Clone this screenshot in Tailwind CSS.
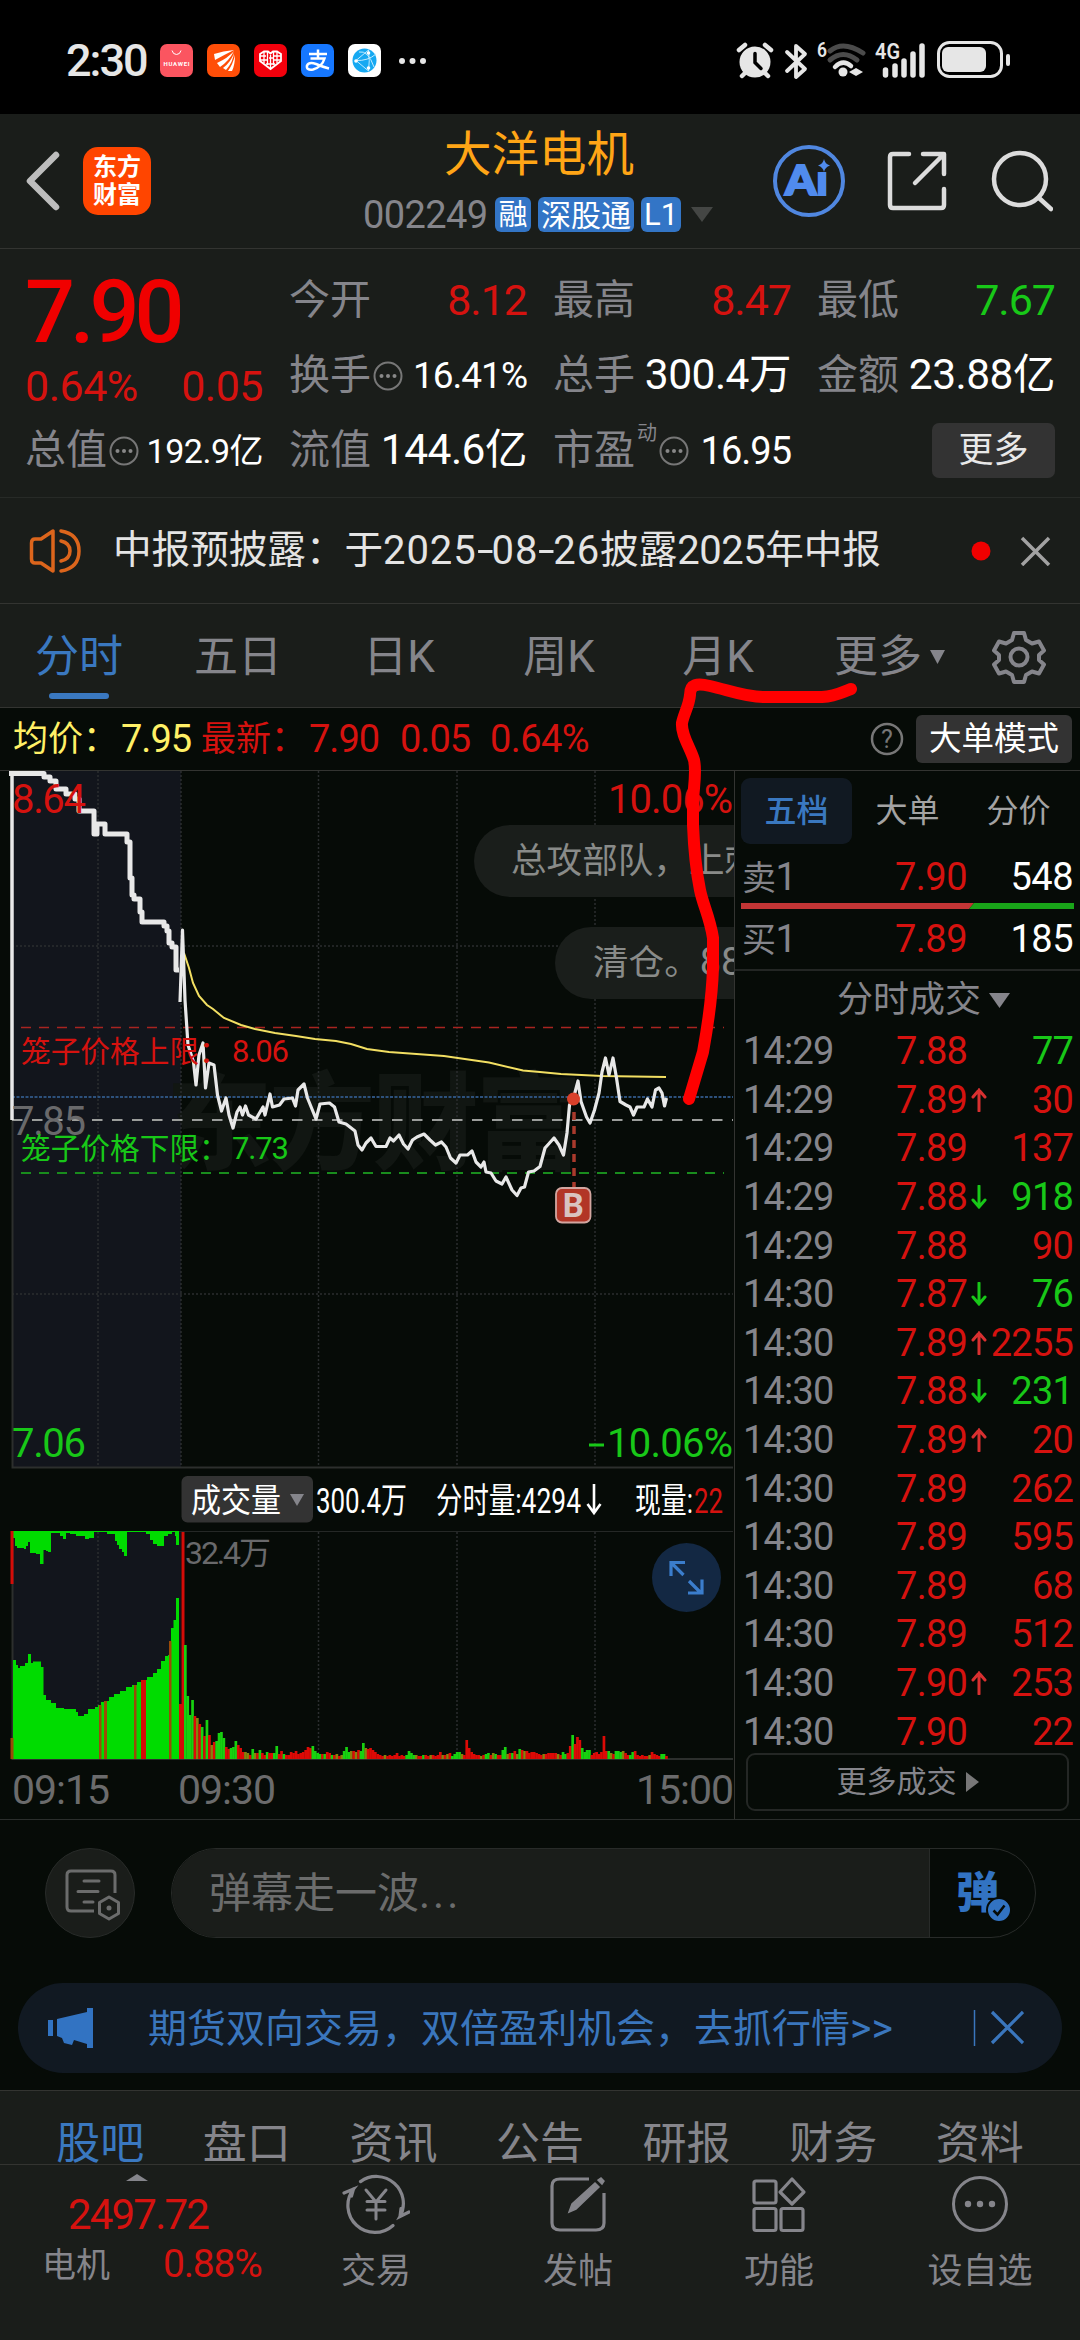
<!DOCTYPE html>
<html lang="zh-CN">
<head>
<meta charset="utf-8">
<title>大洋电机 002249</title>
<script src="https://cdn.jsdelivr.net/npm/@tailwindcss/browser@4"></script>
</head>
<body class="bg-black">
<div class="relative flex h-[2340px] w-[1080px] flex-col overflow-hidden bg-[#060b07] font-['Roboto','Noto_Sans_CJK_SC',sans-serif] leading-none whitespace-nowrap text-[#85858b]">

  <!-- status bar -->
  <div class="flex h-[114px] shrink-0 items-center bg-black pt-[7px] pl-[66px] text-[#e6e6e6]">
    <div class="w-[94px] text-[45px] font-medium tracking-[-2px]">2:30</div>
    <div class="flex gap-[14px]">
      <svg width="33" height="33" viewBox="0 0 33 33"><rect width="33" height="33" rx="7" fill="#fb5560"/><path d="M12 6.500q1 4 4.500 4t4.500-4" fill="none" stroke="#fff" stroke-width="1"/><text x="3.500" y="21.500" font-size="6" font-weight="700" fill="#fff" textLength="26">HUAWEI</text></svg>
      <svg width="33" height="33" viewBox="0 0 33 33"><rect width="33" height="33" rx="7" fill="#ff4e08"/><path d="M7 10Q16 7 27 6Q17 11 8 16ZM10 19Q21 14 27 7Q22 17 13 23ZM16 24Q24 18 27 9Q26 18 19 26ZM21 27Q26 20 28 11Q28 21 25 27Z" fill="#fff"/></svg>
      <svg width="33" height="33" viewBox="0 0 33 33"><rect width="33" height="33" rx="7" fill="#f3000c"/><path d="M16.500 25L6 17V10L10 7.500h4l2.500 2 2.500-2h4l4 2.500v7Z" fill="none" stroke="#fff" stroke-width="1.800"/><path d="M10 8v11M13.500 8v13M19.500 8v13M23 8v11M6 12h6M6 16h7M20 12h7M20 16h7M15 14h4M16.500 11v13M12 20h9" stroke="#fff" stroke-width="1.300"/></svg>
      <svg width="33" height="33" viewBox="0 0 33 33"><rect width="33" height="33" rx="7" fill="#1677ff"/><path d="M8 10h18M17 5.500v9M9.500 14.500h14Q21 23 12 25.500Q5 26.500 6 21.500Q8 17.500 15 20Q22 23 28 24.500" fill="none" stroke="#fff" stroke-width="2.500"/></svg>
      <svg width="33" height="33" viewBox="0 0 33 33"><rect width="33" height="33" rx="7" fill="#fff"/><circle cx="16.500" cy="16.500" r="12" fill="#16a9f2"/><path d="M20.500 6L8 16.500 20.500 27M8 16.500Q20 17 28 10M20.500 6Q22 17 20.500 27M11 8Q20 6 26 23" fill="none" stroke="#bfeaff" stroke-width="1"/><circle cx="20.500" cy="9" r="1.800" fill="#fff"/><circle cx="8" cy="17" r="1.800" fill="#fff"/><circle cx="20.500" cy="24" r="1.800" fill="#fff"/></svg>
    </div>
    <svg class="ml-[17px]" width="30" height="8" viewBox="0 0 30 8" fill="#e6e6e6"><circle cx="4" cy="4" r="3"/><circle cx="14.500" cy="4" r="3"/><circle cx="25" cy="4" r="3"/></svg>
    <svg class="ml-[308px]" width="276" height="42" viewBox="735 40 276 42">
      <g fill="none" stroke="#e6e6e6" stroke-linecap="round">
        <circle cx="754" cy="62" r="15.500" fill="#e6e6e6" stroke="none"/>
        <path d="M738 50l6-5M770 50l-6-5M744 73l-3 3M764 73l3 3" stroke-width="4.500"/>
        <path d="M754 53.500v9l6 6" stroke="#000" stroke-width="3.500"/>
        <path d="M786 52l18 17-9 8V46l9 8-18 17" stroke-width="3.800" stroke-linejoin="round"/>
        <path d="M829 51Q842 40 862 53" stroke="#4b4b4b" stroke-width="5"/>
        <path d="M829 60Q842 49 856 60" stroke="#4b4b4b" stroke-width="5"/>
        <path d="M834 67Q842 59 850 66" stroke-width="4.500"/>
        <path d="M884.500 70v5M894 66v9M903 61v14M912 54v21M921 46v29" stroke-width="5.500"/>
        <rect x="937.500" y="42.500" width="63" height="34" rx="11" stroke-width="3"/>
        <path d="M1007 56v8" stroke-width="4"/>
      </g>
      <g fill="#e6e6e6"><circle cx="842" cy="72" r="4.500"/><path d="M848 72l7-4v8ZM862 72l-7-4v8Z"/><rect x="941" y="47" width="44" height="25" rx="6"/>
      <text x="816" y="57" font-size="21" font-weight="600" textLength="10" lengthAdjust="spacingAndGlyphs">6</text>
      <text x="874" y="59" font-size="22" font-weight="600" textLength="25" lengthAdjust="spacingAndGlyphs">4G</text></g>
    </svg>
  </div>

  <!-- title bar -->
  <div class="flex h-[135px] shrink-0 items-center border-b border-[#333431] bg-[#1a1d1a]">
    <svg class="ml-[24px]" width="38" height="62" viewBox="0 0 38 62"><path d="M32 5L6 31l26 26" fill="none" stroke="#bdbdbd" stroke-width="6.500" stroke-linecap="round" stroke-linejoin="round"/></svg>
    <div class="ml-[21px] flex h-[68px] w-[68px] flex-col items-center justify-center gap-1 rounded-[15px] bg-[#ff4500] text-[24px] font-bold text-white"><span>东方</span><span>财富</span></div>
    <div class="ml-[212px] flex w-[352px] flex-col pt-[4px]">
      <div class="pl-[81px] text-[47.500px] text-[#ffa516]">大洋电机</div>
      <div class="mt-[16px] flex items-center gap-[7px] text-[31px] text-white">
        <span class="w-[125px] text-[38px] tracking-[-0.6px] text-[#85858b]">002249</span>
        <span class="flex h-[35px] w-[36px] items-center justify-center rounded-[6px] bg-[#3375c6] pt-[2px] text-[29px]">融</span>
        <span class="flex h-[35px] w-[96px] items-center justify-center rounded-[6px] bg-[#3375c6] pt-[2px] text-[30px]">深股通</span>
        <span class="flex h-[35px] w-[40px] items-center justify-center rounded-[6px] bg-[#3375c6] text-[31px]">L1</span>
        <svg class="ml-[3px]" width="22" height="15" viewBox="0 0 22 15"><path d="M0 0h22L11 15Z" fill="#444644"/></svg>
      </div>
    </div>
    <svg class="ml-[57px]" width="74" height="76" viewBox="0 0 74 76"><circle cx="37" cy="38" r="34" fill="none" stroke="#5087e0" stroke-width="4"/><text x="13" y="52" font-family="Lato" font-weight="900" font-size="41" fill="#508bee" stroke="#508bee" stroke-width="2" textLength="43" lengthAdjust="spacingAndGlyphs">Aı</text><path d="M52 16q1 5 6 6.500-5 1.500-6 6.500-1-5-6-6.500 5-1.500 6-6.500Z" fill="#508bee"/></svg>
    <svg class="ml-[41px]" width="60" height="60" viewBox="0 0 60 60" fill="none" stroke="#dcdcdc" stroke-width="4.500" stroke-linecap="round" stroke-linejoin="round"><path d="M22 3H6Q3 3 3 6v48q0 3 3 3h48q3 0 3-3V38M36 3h21v20M55 5L28 32"/></svg>
    <svg class="ml-[44px]" width="62" height="64" viewBox="0 0 62 64" fill="none" stroke="#dcdcdc" stroke-width="4.500" stroke-linecap="round"><circle cx="29" cy="30" r="26"/><path d="M48 49l12 11"/></svg>
  </div>

  <!-- quote -->
  <div class="grid h-[249px] shrink-0 grid-cols-[238px_238px_238px_238px] grid-rows-[75px_75px_75px] gap-x-[26px] border-b border-[#272a27] bg-[#1a1d1a] pt-[14px] pl-[25px] text-[41px]">
    <div class="row-span-2 flex flex-col text-[#d5120f]">
      <div class="flex h-[98px] items-center text-[88px] font-medium tracking-[-5px] text-[#f00000]">7.90</div>
      <div class="flex h-[53px] items-center justify-between text-[43px] tracking-[-0.5px]"><span>0.64%</span><span>0.05</span></div>
    </div>
    <div class="flex items-center justify-between"><span>今开</span><span class="text-[43px] tracking-[-1px] text-[#d5120f]">8.12</span></div>
    <div class="flex items-center justify-between"><span>最高</span><span class="text-[43px] tracking-[-1px] text-[#d5120f]">8.47</span></div>
    <div class="flex items-center justify-between"><span>最低</span><span class="text-[43px] tracking-[-1px] text-[#18c818]">7.67</span></div>
    <div class="flex items-center"><span>换手</span><svg class="ml-[2px]" width="30" height="30" viewBox="0 0 30 30"><circle cx="15" cy="15" r="13.500" fill="none" stroke="#777" stroke-width="2"/><g fill="#888"><circle cx="8.500" cy="15" r="2"/><circle cx="15" cy="15" r="2"/><circle cx="21.500" cy="15" r="2"/></g></svg><span class="ml-auto text-[37px] tracking-[-1px] text-white">16.41%</span></div>
    <div class="flex items-center justify-between"><span>总手</span><span class="text-[42.500px] tracking-[-0.5px] text-white">300.4万</span></div>
    <div class="flex items-center justify-between"><span>金额</span><span class="text-[42.500px] tracking-[-0.5px] text-white">23.88亿</span></div>
    <div class="flex items-center"><span>总值</span><svg class="ml-[2px]" width="30" height="30" viewBox="0 0 30 30"><circle cx="15" cy="15" r="13.500" fill="none" stroke="#777" stroke-width="2"/><g fill="#888"><circle cx="8.500" cy="15" r="2"/><circle cx="15" cy="15" r="2"/><circle cx="21.500" cy="15" r="2"/></g></svg><span class="ml-auto text-[34px] tracking-[-0.5px] text-white">192.9亿</span></div>
    <div class="flex items-center justify-between"><span>流值</span><span class="text-[42.500px] tracking-[-0.5px] text-white">144.6亿</span></div>
    <div class="flex items-center"><span>市盈</span><span class="ml-[2px] mb-9 text-[20px]">动</span><svg class="ml-[2px]" width="30" height="30" viewBox="0 0 30 30"><circle cx="15" cy="15" r="13.500" fill="none" stroke="#777" stroke-width="2"/><g fill="#888"><circle cx="8.500" cy="15" r="2"/><circle cx="15" cy="15" r="2"/><circle cx="21.500" cy="15" r="2"/></g></svg><span class="ml-auto text-[38px] tracking-[-1px] text-white">16.95</span></div>
    <div class="flex items-center justify-end"><span class="flex h-[55px] w-[123px] items-center justify-center rounded-[7px] bg-[#333] text-[35px] text-[#e8e8e8]">更多</span></div>
  </div>

  <!-- notice -->
  <div class="flex h-[106px] shrink-0 items-center border-b border-[#333431] bg-[#1a1d1a] text-[38.600px] text-[#e4e4e4]">
    <svg class="ml-[29px]" width="54" height="46" viewBox="0 0 54 46" fill="none" stroke="#dc651c" stroke-width="3.500" stroke-linecap="round" stroke-linejoin="round"><path d="M24 3v40L12 35H6Q2.500 35 2.500 31V15Q2.500 11 6 11h6ZM32 3Q50 6 50 23T32 43M32 13Q41 15 41 23T32 33"/></svg>
    <div class="ml-[30px] flex items-center"><span>中报预披露：于</span><span class="text-[40px] tracking-[0.900px]">2025<span class="inline-block w-[15px] origin-left scale-x-150">-</span>08<span class="inline-block w-[15px] origin-left scale-x-150">-</span>26</span><span>披露</span><span class="text-[40px] tracking-[-0.5px]">2025</span><span>年中报</span></div>
    <svg class="absolute left-[970px]" width="82" height="30" viewBox="0 0 82 30"><circle cx="11" cy="15" r="9.500" fill="#f00000"/><path d="M52 2l27 27M79 2L52 29" stroke="#a2a2a2" stroke-width="3.500"/></svg>
  </div>

  <!-- period tabs -->
  <div class="flex h-[104px] shrink-0 items-center border-b border-[#333431] bg-[#1a1d1a] pt-[2px] text-[44px]">
    <div class="relative flex h-full w-[158px] items-center justify-center text-[#3a78c0]">分时<span class="absolute bottom-[8px] h-[6px] w-[60px] rounded-full bg-[#3a78c0]"></span></div>
    <div class="w-[160px] text-center">五日</div>
    <div class="w-[162px] text-center">日K</div>
    <div class="w-[158px] text-center">周K</div>
    <div class="w-[160px] text-center">月K</div>
    <div class="ml-[36px] flex w-[150px] items-center gap-[8px]">更多<svg width="15" height="14" viewBox="0 0 15 14"><path d="M0 0h15L7.500 14Z" fill="#85858b"/></svg></div>
    <svg class="ml-[7px]" width="56" height="56" viewBox="0 0 56 56" fill="none" stroke="#85858b" stroke-width="4"><path stroke-linejoin="round" d="M23 4h10l2 7 6 3.500 7-2 5 9-5 4.500v5l5 4.500-5 9-7-2-6 3.500-2 7H23l-2-7-6-3.500-7 2-5-9L8 31v-5l-5-4.500 5-9 7 2L21 11Z"/><circle cx="28" cy="28" r="8.500"/></svg>
  </div>

  <!-- price summary -->
  <div class="flex h-[63px] shrink-0 items-center border-b border-[#333431] pl-[13px] text-[35px] text-[#d5120f]">
    <span class="w-[108px] text-[#fff066]">均价：</span><span class="w-[80px] text-[38px] tracking-[-1px] text-[#fff066]">7.95</span>
    <span class="w-[108px]">最新：</span><span class="w-[91px] text-[38px] tracking-[-1px]">7.90</span><span class="w-[90px] text-[38px] tracking-[-1px]">0.05</span><span class="w-[120px] text-[38px] tracking-[-0.6px]">0.64%</span>
    <svg class="ml-[260px]" width="34" height="34" viewBox="0 0 34 34"><circle cx="17" cy="17" r="15" fill="none" stroke="#777" stroke-width="2.500"/><text x="17" y="26" font-size="25" text-anchor="middle" fill="#777">?</text></svg>
    <span class="ml-[12px] flex h-[48px] w-[156px] items-center justify-center rounded-[6px] bg-[#333] text-[32.500px] text-white">大单模式</span>
  </div>

  <!-- charts and order panel -->
  <div class="flex h-[1049px] shrink-0 border-b border-[#2b2e2c]">
    <svg class="shrink-0" width="734" height="1048" viewBox="0 771 734 1048">
      <rect x="12" y="771" width="169" height="697" fill="#12151c"/>
      <rect x="12" y="1531" width="169" height="228" fill="#12151c"/>
      <text x="166" y="1161" font-size="106" font-weight="900" fill="#111612" textLength="416">东方财富</text>
      <g stroke="#2b2e2f" stroke-width="1.500" stroke-dasharray="2 2"><path d="M98 771V1467M181 771V1467M318.500 771V1467M457 771V1467M595 771V1467M12 946H733M12 1294H733M98 1532V1759M318.500 1532V1759M457 1532V1759M595 1532V1759"/></g>
      <path d="M12.500 1120V1467.500H733M12.500 1531V1759H733" fill="none" stroke="#2c2f2d" stroke-width="2"/><path d="M12 1531.500H733" stroke="#252826"/>
      <g fill="#1a1e1b"><rect x="474" y="825" width="320" height="72" rx="36"/><rect x="555" y="927" width="300" height="72" rx="36"/></g>
      <g font-size="35.600" fill="#898b89"><text x="511" y="873">总攻部队，上刺</text><text x="593" y="975">清仓。<tspan font-size="38">88</tspan></text></g>
      <path d="M21 1027.500H724" stroke="#a82420" stroke-width="1.500" stroke-dasharray="10 8"/>
      <path d="M21 1173H724" stroke="#198c1d" stroke-width="1.800" stroke-dasharray="10 8"/>
      <path d="M12 1097H733" stroke="#2d517c" stroke-width="2" stroke-dasharray="3 1.500"/>
      <path d="M12 1120H733" stroke="#9b9d9b" stroke-width="2" stroke-dasharray="10.500 9.500"/>
      <path d="M184 953L189 968 193 983 199 996 207 1005 213 1009 224 1018 241 1025 255 1029 275 1033 296 1036 315 1039 336 1041 351 1044 367 1049 389 1052 444 1056 489 1062.500 523 1070.500 540 1072 561 1074 602 1076 666 1077" fill="none" stroke="#f2df62" stroke-width="2"/>
      <path d="M12 1120V773" stroke="#e8e8e8" stroke-width="3.500"/>
      <path d="M9 773.500H44V777H50V781H56V789H66V794H75V799H79V811H94V834H97V824H105V834H127V842H130V878H132V895H134V899H140V912H142V922H164V926H167V931H169V943H172V947H176V970H179" fill="none" stroke="#e8e8e8" stroke-width="5" stroke-linejoin="round"/>
      <path d="M180 1002L182.500 930 185 1000 188 1045 193.500 1062 196 1085 199 1055 203 1043 205.500 1088 209 1063 214 1065 217.500 1095 221.500 1111 226 1098 229 1115 233 1128 237 1112 240 1107 242.500 1115 245.500 1106 248.500 1115 256 1119 263 1107 265 1115 270 1094 272.500 1107 279.500 1105 284 1099 292.500 1098 295.500 1106 298 1090 304 1084 307.500 1098 316 1119 320 1104 329.500 1103 334.500 1107 339 1122 346 1124 355 1131 358 1145 362 1150 366 1143 371 1138 376 1146.500H386L390 1138 393.500 1141 399 1135 403.500 1144 408 1149 412.500 1140 417 1137 424 1134 430 1140 435.500 1145 441.500 1142 446 1147 450.500 1158 456 1163 460 1155H467.500L472 1151 476 1162 481 1167 484 1162 486 1172 491 1173 496 1181 502 1184 506 1177 512 1190 517 1195.500 521 1188 524.500 1187 528.500 1172 534 1171 540 1166.500 545 1148 554 1138 559 1145 563.500 1155 567 1133 569.500 1105 573.500 1098 578 1081 581 1101.500 586.500 1117 590 1123 594.500 1110 599 1093 602 1072 605.500 1058 609 1075 613 1058 616.500 1078 620 1101.500 626 1105 630 1107 633.500 1115 637 1107H644L647.500 1099 652 1107 655.500 1090 659 1088 662 1093 664.500 1106 666.500 1098" fill="none" stroke="#e8e8e8" stroke-width="3.200" stroke-linejoin="round"/>
      <circle cx="573.500" cy="1099" r="6.500" fill="#d9402a"/><path d="M574 1112V1187" stroke="#a93a2c" stroke-width="3.500" stroke-dasharray="8 6"/>
      <rect x="556" y="1188" width="34.500" height="34.500" rx="6" fill="#b23526" stroke="#d2a6a0" stroke-width="1.800"/><text x="573.300" y="1217" font-size="33" font-weight="700" fill="#d9c2c0" text-anchor="middle">B</text>
      <g font-size="40">
        <g fill="#d5120f"><text x="12" y="813" textLength="74">8.64</text><text x="608" y="813" textLength="125">10.06%</text><text x="21" y="1061.500" font-size="29.700">笼子价格上限：</text><text x="232" y="1061.500" font-size="31" textLength="57">8.06</text></g>
        <text x="12" y="1135" textLength="74" fill="#69696b">7.85</text>
        <g fill="#18c818"><text x="21" y="1159" font-size="29.700">笼子价格下限：</text><text x="232" y="1159" font-size="31" textLength="57">7.73</text><text x="12" y="1456.500" textLength="74">7.06</text><text x="607" y="1456.500" textLength="126">10.06%</text><rect x="589" y="1443.500" width="15" height="3"/></g>
      </g>
      <!-- volume caption -->
      <rect x="181.500" y="1476" width="131.500" height="46.500" rx="6" fill="#333"/>
      <path d="M290 1494h14l-7 12Z" fill="#85858b"/>
      <g font-size="35" fill="#fff"><text x="191" y="1511.500" font-size="33" textLength="90" lengthAdjust="spacingAndGlyphs">成交量</text><text x="316" y="1512.500" textLength="91" lengthAdjust="spacingAndGlyphs">300.4万</text><text x="436" y="1512.500" textLength="145" lengthAdjust="spacingAndGlyphs">分时量:4294</text><path d="M594 1484v29M587.500 1504l6.500 9 6.500-9" fill="none" stroke="#fff" stroke-width="2.600"/><text x="635" y="1512.500" textLength="58" lengthAdjust="spacingAndGlyphs">现量:</text><text x="694" y="1512.500" textLength="29" lengthAdjust="spacingAndGlyphs" fill="#d5120f">22</text></g>
      <!-- auction volume -->
      <path fill="#00dc00" d="M13 1759V1660H16V1665H18V1668H20V1666H25V1663H28V1654H31V1663H33V1661.500H41V1667H43.500V1695H46V1700H51V1703H56V1708H64V1709H76V1712H78V1716H84V1714H88V1709H95V1707H98V1705H101V1702H104V1701H109V1697H114V1694H120V1691H126V1687H132V1685H137V1682H143V1680H147V1677H153V1673H157V1669H161V1661H165V1656H168V1655H171V1628H173.500V1620H176V1598H179V1759Z"/>
      <path fill="#00dc00" d="M13 1531V1538H15V1546H17V1548H24V1549H26V1546H28V1542H30V1553H36V1554H40V1564H43.500V1550H46V1551H48V1552H51V1533H60V1536H63V1539H66V1533H70V1534H76V1536H85V1539H89V1538H94V1532H107V1534H115V1541H117V1545H119V1549H122V1552H124V1556H127V1532H146V1534H150V1540H153V1544H157V1546H164V1536H168V1534H172V1532H175V1536H176V1545H179V1531Z"/>
      <g fill="#9a4a08"><rect x="10.500" y="1738" width="3" height="21"/><rect x="99" y="1705" width="2.500" height="54"/><rect x="104" y="1701" width="3" height="58"/><rect x="134" y="1685" width="2.500" height="74"/><rect x="169" y="1641" width="2.500" height="118"/></g>
      <g fill="#d40c08"><rect x="10.500" y="1531" width="3" height="53"/><rect x="141" y="1680" width="5" height="79"/><rect x="179" y="1704" width="3" height="55"/><rect x="181.500" y="1532" width="3" height="227"/></g>
      <g id="bars"></g>
      <text x="185" y="1564" font-size="32" fill="#69696b" textLength="86">32.4万</text>
      <circle cx="686.500" cy="1577.500" r="34.500" fill="#132843"/>
      <path d="M671 1576v-13.500h14M671.500 1563l12 12M689 1581l12 12M702 1579.500v13.500h-14" fill="none" stroke="#3b7dcc" stroke-width="3.200"/>
      <g font-size="41" fill="#6b6b6c"><text x="12" y="1804" textLength="98">09:15</text><text x="178" y="1804" textLength="98">09:30</text><text x="636" y="1804" textLength="98">15:00</text></g>
    </svg>

    <div class="flex w-[346px] flex-col border-l border-[#333431]">
      <div class="flex h-[79px] items-center pl-[6px] text-[32px] text-[#a3a3a3]">
        <span class="flex h-[66px] w-[111px] items-center justify-center rounded-[9px] bg-[#111922] font-medium text-[#3a78c0]">五档</span>
        <span class="w-[111px] text-center">大单</span><span class="w-[111px] text-center">分价</span>
      </div>
      <div class="flex h-[53px] items-center pr-[7px] pl-[7px] text-[38px] tracking-[-0.5px]"><span class="w-[120px]"><span class="text-[34px]">卖</span>1</span><span class="w-[105px] text-right text-[#d5120f]">7.90</span><span class="ml-auto text-white">548</span></div>
      <svg class="ml-[6px] shrink-0" width="333" height="6" viewBox="0 0 333 6"><path d="M0 0h233l-5 6H0Z" fill="#c23535"/><path d="M233 0h100v6H228Z" fill="#19a519"/></svg>
      <div class="flex h-[60px] items-center pr-[7px] pl-[7px] text-[38px] tracking-[-0.5px]"><span class="w-[120px]"><span class="text-[34px]">买</span>1</span><span class="w-[105px] text-right text-[#d5120f]">7.89</span><span class="ml-auto text-white">185</span></div>
      <div class="flex h-[58px] items-center border-t-2 border-[#232624] pt-[2px] pl-[102px] text-[36px]">分时成交<svg class="ml-[8px]" width="21" height="15" viewBox="0 0 21 15"><path d="M0 0h21L10.500 15Z" fill="#85858b"/></svg></div>
      <div id="ticks" class="flex flex-col text-[38px] tracking-[-0.8px]"></div>
      <div class="mt-[-3px] ml-[11px] flex h-[58px] w-[323px] shrink-0 items-center justify-center gap-[9px] rounded-[9px] border-2 border-[#242725] text-[30px]">更多成交<svg width="13" height="20" viewBox="0 0 13 20"><path d="M0 0l13 10L0 20Z" fill="#777"/></svg></div>
    </div>
  </div>

  <!-- comment input -->
  <div class="flex h-[90px] shrink-0 mt-[28px] pl-[45px]">
    <div class="flex h-[90px] w-[90px] items-center justify-center rounded-full border border-[#282b29] bg-[#1a1d1a]">
      <svg class="mt-1 ml-[3px]" width="58" height="54" viewBox="0 0 58 54" fill="none" stroke="#6b6c6c" stroke-width="3" stroke-linejoin="round"><path d="M31 43H8Q4 43 4 39V7Q4 3 8 3H48Q52 3 52 7V25"/><path d="M21 13h15M15 23.500h20M21 34h9" stroke-linecap="round"/><path d="M46 29l9.500 5.500v11L46 51l-9.500-5.500v-11Z"/><circle cx="46" cy="40" r="2.500" fill="#6b6c6c" stroke="none"/></svg>
    </div>
    <div class="ml-[36px] flex w-[865px] items-stretch overflow-hidden rounded-full border border-[#282b29]">
      <div class="flex w-[758px] items-center border-r border-[#282b29] bg-[#1a1d1a] pt-[2px] pl-[37px] text-[42px] text-[#6b6c6c]">弹幕走一波<span class="tracking-[3px]">...</span></div>
      <div class="relative flex flex-1 items-center pl-[26px] text-[43px] font-black text-[#3273c2]">弹<svg class="absolute top-[48px] left-[56px]" width="26" height="26" viewBox="0 0 26 26"><circle cx="13" cy="13" r="12" fill="#3273c2" stroke="#060b07" stroke-width="2"/><path d="M7.500 13.500l4 4 7-9" fill="none" stroke="#060b07" stroke-width="2.500"/></svg></div>
    </div>
  </div>

  <!-- promotion -->
  <div class="mt-[45px] ml-[18px] flex h-[90px] w-[1044px] shrink-0 items-center rounded-full bg-[#111922] text-[39px] text-[#3a76bd]">
    <svg class="ml-[30px]" width="46" height="40" viewBox="0 0 46 40" fill="#3273c2"><path d="M0 12h5v16H0ZM9 11L39 4V0h6v40h-6v-4l-13-4-2 5-8-2-2-5-5-2Z"/></svg>
    <span class="ml-[54px]">期货双向交易，双倍盈利机会，去抓行情<span class="text-[41px]">&gt;&gt;</span></span>
    <svg class="absolute left-[972px]" width="52" height="38" viewBox="0 0 52 38" stroke="#3a76bd"><path d="M2.500 1v36" stroke-width="1.500"/><path d="M20 3l31 31M51 3L20 34" stroke-width="3.200"/></svg>
  </div>

  <!-- content tabs -->
  <div class="mt-[17px] flex h-[75px] shrink-0 items-center overflow-hidden border-y border-[#333431] bg-[#1a1d1a] px-[27px] pt-[33px] text-[44px]">
    <span class="flex-1 text-center text-[#3a78c0]">股吧</span><span class="flex-1 text-center">盘口</span><span class="flex-1 text-center">资讯</span><span class="flex-1 text-center">公告</span><span class="flex-1 text-center">研报</span><span class="flex-1 text-center">财务</span><span class="flex-1 text-center">资料</span>
  </div>

  <!-- bottom bar -->
  <div class="flex h-[175px] shrink-0 bg-[#1a1d1a] text-[35px]">
    <div class="flex w-[274px] flex-col items-center pt-[9px]">
      <svg width="22" height="7" viewBox="0 0 22 7"><path d="M0 7L11 0l11 7Z" fill="#85858b"/></svg>
      <div class="mt-[13px] pl-[2px] text-[42px] tracking-[-1.8px] text-[#d5120f]">2497.72</div>
      <div class="mt-[9px] flex w-full items-center pl-[42px]"><span class="w-[121px] text-[34px]">电机</span><span class="text-[39px] tracking-[-1.2px] text-[#d5120f]">0.88%</span></div>
    </div>
    <div class="flex w-[204px] flex-col items-center pt-[8px]">
      <svg width="68" height="62" viewBox="0 0 68 62" fill="none" stroke="#85858b" stroke-width="3.200" stroke-linecap="round"><path d="M18.500 8.600A27 27 0 0 1 58 43.500l9-4.500M58 43.500l1-8"/><path d="M51 52.500A27 27 0 0 1 11.500 16L2 20M11.500 16l-2 7"/><path d="M24 17l10 12 10-12M34 29v17M25 28.500h18M25 37h18" stroke-width="3"/></svg>
      <span class="mt-[19px]">交易</span>
    </div>
    <div class="flex w-[200px] flex-col items-center pt-[8px]">
      <svg width="60" height="62" viewBox="0 0 60 62" fill="none" stroke="#85858b" stroke-width="3.200"><path d="M41 6H12Q4 6 4 13V50Q4 57 12 57H48Q56 57 56 50V20"/><path d="M21 39l3-8L47 10l4 4L28 36ZM50 7l3-2 3 3-2 3Z" fill="#85858b" stroke-width="1.500"/></svg>
      <span class="mt-[19px]">发帖</span>
    </div>
    <div class="flex w-[202px] flex-col items-center pt-[8px]">
      <svg width="60" height="62" viewBox="0 0 60 62" fill="none" stroke="#85858b" stroke-width="3.200" stroke-linejoin="round"><rect x="5" y="8" width="22" height="22" rx="2"/><rect x="5" y="35.500" width="22" height="22" rx="2"/><rect x="32" y="35.500" width="22" height="22" rx="2"/><path d="M43 6l12 13-12 12-12-12Z"/></svg>
      <span class="mt-[19px]">功能</span>
    </div>
    <div class="flex w-[200px] flex-col items-center pt-[8px]">
      <svg width="60" height="62" viewBox="0 0 60 62"><circle cx="30" cy="31" r="26.500" fill="none" stroke="#85858b" stroke-width="3"/><g fill="#85858b"><circle cx="18" cy="31" r="3.200"/><circle cx="30" cy="31" r="3.200"/><circle cx="42" cy="31" r="3.200"/></g></svg>
      <span class="mt-[19px]">设自选</span>
    </div>
  </div>

  <!-- freehand marker stroke -->
  <svg class="absolute top-[670px] left-[660px]" width="210" height="450" viewBox="660 670 210 450" fill="none" stroke="#ff0000" stroke-width="12" stroke-linecap="round" stroke-linejoin="round"><path d="M851 689C840 693 836 696 822 697H763C745 697 728 690 710 686C697 683 690 684 690 695C689 706 684 713 682 723C681 735 690 747 694 760C697 773 693 790 693 803V825C694 850 696 870 700 890C703 905 710 918 713 938V968C712 1000 707 1030 703 1052Q700 1062 689 1099"/></svg>
</div>

<script>
  // trade ticks: time, price, direction, volume, side
  var ticks = [
    ['14:29','7.88','','77','g'],['14:29','7.89','u','30','r'],['14:29','7.89','','137','r'],['14:29','7.88','d','918','g'],
    ['14:29','7.88','','90','r'],['14:30','7.87','d','76','g'],['14:30','7.89','u','2255','r'],['14:30','7.88','d','231','g'],
    ['14:30','7.89','u','20','r'],['14:30','7.89','','262','r'],['14:30','7.89','','595','r'],['14:30','7.89','','68','r'],
    ['14:30','7.89','','512','r'],['14:30','7.90','u','253','r'],['14:30','7.90','','22','r']
  ];
  var up = '<svg width="16" height="24" viewBox="0 0 16 24" fill="none" stroke="#d93030" stroke-width="3" stroke-linecap="round"><path d="M8 23V2M2 9l6-7 6 7"/></svg>';
  var down = '<svg width="16" height="24" viewBox="0 0 16 24" fill="none" stroke="#18c818" stroke-width="3" stroke-linecap="round"><path d="M8 1v21M2 15l6 7 6-7"/></svg>';
  document.getElementById('ticks').innerHTML = ticks.map(function (t) {
    return '<div class="flex h-[48.600px] items-center pl-[8px] pr-[7px]"><span class="w-[116px] shrink-0">' + t[0] + '</span><span class="w-[108px] shrink-0 text-right text-[#d5120f]">' + t[1] +
      '</span><span class="flex w-[20px] shrink-0 justify-end">' + (t[2] === 'u' ? up : t[2] === 'd' ? down : '') + '</span><span class="ml-auto ' +
      (t[4] === 'g' ? 'text-[#18c818]' : 'text-[#d5120f]') + '">' + t[3] + '</span></div>';
  }).join('');

  // intraday volume bars: one letter for the colour, then the height in pixels
  var v = 'g114 g63 g44 g59 r43 o41 r35 g32 r23 g39 r24 o14 r17 g18 g26 g27 g21 r12 r10 g11 g12 g18 r14 r11 r7 o7 o6 r4 g10 o6 r6 g9 r6 r4 g7 r6 r6 g6 g13 r5 r8 g5 r4 r4 r7 r6 r8 r5 r6 r7 r9 r12 r11 g13 g8 g6 g5 r5 g5 r7 r6 g4 r4 o5 r3 o4 g8 g12 g7 o8 r8 o7 r9 g8 g16 o11 r10 r11 r9 r7 r5 r4 r3 o4 r3 r4 r3 r4 r6 r3 r4 r3 g4 g8 g6 g4 o4 r3 r3 g4 r4 r3 o4 r4 r3 r4 r7 o4 r4 o5 r6 g3 g5 g7 g7 o5 r4 r19 r11 r7 r5 r4 r4 o3 r4 g5 g6 r4 o6 g5 r4 r4 g9 g12 o5 r6 g6 r8 o5 g10 r9 o8 r8 r6 r7 r7 r6 r5 r4 o5 r5 r6 r6 r6 r6 o5 r4 g7 g5 r6 r13 g24 r15 r22 r19 g11 g7 g9 g9 r4 r6 r7 r5 r7 r23 r8 g8 o6 r5 g8 g8 g7 o8 r6 r4 g4 g7 r8 r4 r3 r4 r3 r3 o4 r7 r5 r4 r3 g5 g5 r3'.split(' ');
  var colors = { g: '#17d210', r: '#dc0a06', o: '#87820c' };
  var step = (667.500 - 184) / v.length;
  document.getElementById('bars').innerHTML = v.map(function (b, i) {
    var h = +b.slice(1);
    return '<rect x="' + (184 + i * step).toFixed(1) + '" y="' + (1759 - h) + '" width="' + (step + 0.300).toFixed(1) + '" height="' + h + '" fill="' + colors[b[0]] + '"/>';
  }).join('');
</script>
</body>
</html>
